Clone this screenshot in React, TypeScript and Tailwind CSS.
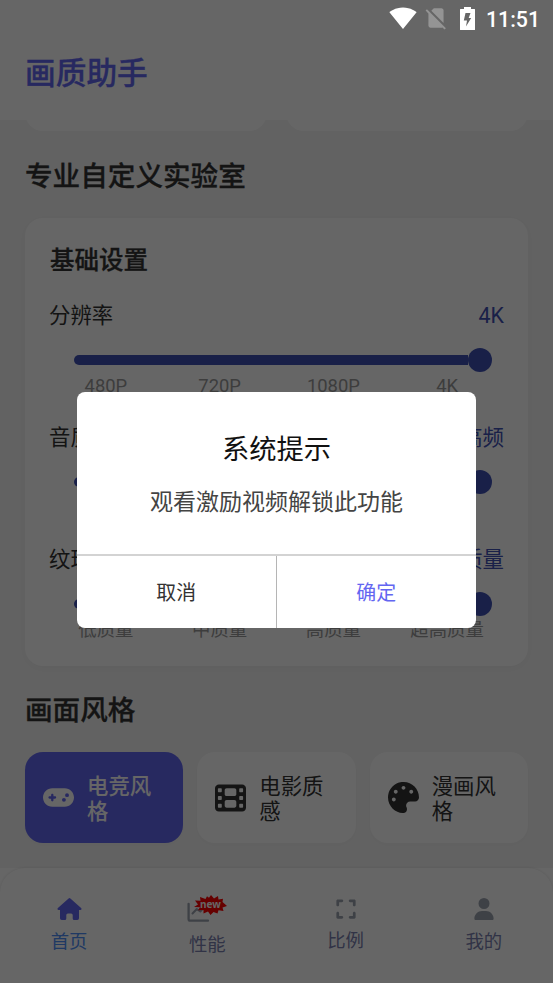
import type { ReactNode } from "react";
import { FaGamepad, FaFilm, FaExpand, FaUser } from "react-icons/fa6";
import { FaPalette } from "react-icons/fa";

function StatusBar() {
  return (
    <div className="absolute left-0 top-0 h-[38px] w-full text-white">
      <svg className="absolute left-[389px] top-[4px]" width="28" height="28" viewBox="0 0 24 24" fill="currentColor">
        <path d="M12.01 21.49L23.64 7c-.45-.34-4.93-4-11.64-4C5.28 3 .81 6.66.36 7l11.63 14.49.01.01.01-.01z" />
      </svg>
      <svg className="absolute left-[423px] top-[5px] text-[#949494]" width="26" height="26" viewBox="0 0 24 24" fill="currentColor">
        <path d="M18.99 5c0-1.1-.89-2-1.99-2h-7L7.66 5.34 19 16.68 18.99 5zM3.65 3.88L2.38 5.15 5 7.77V19c0 1.1.9 2 2 2h10.01c.35 0 .67-.1.96-.26l1.88 1.88 1.27-1.27L3.65 3.88z" />
      </svg>
      <svg className="absolute left-[460px] top-[7px]" width="15" height="23" viewBox="0 0 15 23" fill="currentColor" fillRule="evenodd">
        <path d="M4 0h7v2h3.500q.5 0 .5.500v20q0 .5-.5.500H.5q-.5 0-.5-.5V2.500q0-.5.5-.5H4zM5.500 6L3.800 13.500H7L6 19.500 11.200 11H8.700l1.800-5z" />
      </svg>
      <span className="absolute left-[486px] top-[7px] font-[Roboto] text-[21.3px] font-medium leading-[26px]">11:51</span>
    </div>
  );
}

function SliderRow({ name, value, marks }: { name: string; value: string; marks: string[] }) {
  return (
    <div className="h-[122px]">
      <div className="flex h-[32px] items-center justify-between text-[21.4px] leading-[32px]">
        <span className="text-[#333]">{name}</span>
        <span className="text-[#3f51b5]">{value}</span>
      </div>
      <div className="mt-[15px] flex h-[25px] items-center pl-[25px] pr-[12px]">
        <div className="h-[10px] flex-1 rounded-l-full bg-[#3f51b5]" />
        <div className="size-[24px] rounded-full bg-[#3f51b5]" />
      </div>
      <div className="grid grid-cols-4 text-center text-[18.4px] leading-[27px] text-[#999]">
        {marks.map((m) => (
          <span key={m}>{m}</span>
        ))}
      </div>
    </div>
  );
}

function StyleCard({ icon, label, active }: { icon: ReactNode; label: string; active?: boolean }) {
  return (
    <div
      className={
        active
          ? "flex h-[91px] items-center gap-[13px] rounded-[18px] bg-[#6366f1] px-[18px] text-white shadow-[0_2px_10px_rgba(0,0,0,0.02)]"
          : "flex h-[91px] items-center gap-[13px] rounded-[18px] bg-white px-[18px] text-[#333] shadow-[0_2px_10px_rgba(0,0,0,0.02)]"
      }
    >
      <span className="flex w-[31px] shrink-0 justify-center">{icon}</span>
      <span
        className={
          active
            ? "w-[66px] pt-[2px] text-[21.4px] font-medium leading-[25px]"
            : "w-[66px] pt-[2px] text-[21.4px] leading-[25px]"
        }
      >
        {label}
      </span>
    </div>
  );
}

function HouseIcon() {
  return (
    <svg width="25" height="22" viewBox="0 0 25 22" fill="#6366f1">
      <path d="M11.600.4q.9-.7 1.800 0l10.700 9.700q.6.600.4 1.200-.3.700-1 .7H22v8.300q0 1.700-1.700 1.700h-3.100q-1.500 0-1.500-1.500V17q0-1.600-1.600-1.600h-3.200q-1.600 0-1.600 1.600v3.500Q9.300 22 7.800 22H4.700Q3 22 3 20.300V12H1.500q-.7 0-1-.7-.2-.6.4-1.200z" />
    </svg>
  );
}

function TrendIcon() {
  return (
    <svg width="24" height="24" viewBox="0 0 24 24" fill="none" stroke="#9ca3af" strokeLinecap="round" strokeLinejoin="round">
      <path strokeWidth="2.300" d="M1.600 4.800V20q0 1.700 1.700 1.700H21" />
      <path strokeWidth="2" d="M5.500 14.500L9.800 10l3.500 2.500L18 7" />
    </svg>
  );
}

function NewBadge() {
  return (
    <svg className="absolute left-[7px] top-[-4px]" width="33" height="21" viewBox="0 0 33 21">
      <path
        fill="#ff0000"
        d="M17 0l3 3.500 4-2.500.5 3.500 4.500-.8-.5 3.300 4.500 4-4.500 1.500 1 3.500-5-.7-1 3.200-4-1.500-3 3-2.500-3.500-4.500 2 0-3.500-5.500.3 2-3L0 12l4-2.500L1 5.500l5.500.3L6 2l5.500 2L13 1.200l2 1.600z"
      />
      <text x="16.500" y="12.500" textAnchor="middle" fontFamily="Noto Sans" fontWeight="700" fontSize="10" fill="#fff">
        new
      </text>
    </svg>
  );
}

export default function App() {
  return (
    <div className="relative h-[983px] w-[553px] overflow-hidden bg-[#f5f5f5] font-[Roboto,'Noto_Sans_CJK_SC',sans-serif]">
      <header className="relative flex h-[120px] items-end bg-white px-[25px] pb-[24px]">
        <h1 className="text-[30.7px] font-medium leading-[45px] text-[#6366f1] [-webkit-text-stroke:0.3px]">画质助手</h1>
      </header>

      <main className="px-[25px]">
        <div className="h-[11px] overflow-hidden">
          <div className="-mt-[49px] grid grid-cols-2 gap-[19px]">
            <div className="h-[60px] rounded-[18px] bg-white" />
            <div className="h-[60px] rounded-[18px] bg-white" />
          </div>
        </div>

        <h2 className="mt-[26px] text-[27.6px] font-medium leading-[40px] text-[#333] [-webkit-text-stroke:0.3px]">专业自定义实验室</h2>

        <section className="mt-[21px] h-[448px] rounded-[18px] bg-white px-[24px] pt-[25px] shadow-[0_2px_12px_rgba(0,0,0,0.03)]">
          <h3 className="mb-[21px] pl-px text-[24.5px] font-medium leading-[36px] text-[#333] [-webkit-text-stroke:0.3px]">基础设置</h3>
          <SliderRow name="分辨率" value="4K" marks={["480P", "720P", "1080P", "4K"]} />
          <SliderRow name="音质" value="超高频" marks={[]} />
          <SliderRow name="纹理" value="超高质量" marks={["低质量", "中质量", "高质量", "超高质量"]} />
        </section>

        <h2 className="mt-[25px] text-[27.6px] font-medium leading-[40px] text-[#333] [-webkit-text-stroke:0.3px]">画面风格</h2>

        <div className="mt-[21px] grid grid-cols-3 gap-[14px]">
          <StyleCard active label="电竞风格" icon={<FaGamepad className="size-[31px]" />} />
          <StyleCard label="电影质感" icon={<FaFilm className="h-[32px] w-[31px]" />} />
          <StyleCard label="漫画风格" icon={<FaPalette className="size-[31px]" />} />
        </div>
      </main>

      <div className="mt-[25px] h-[115px] bg-white">
        <nav className="grid h-full grid-cols-4 rounded-t-[25px] bg-white pt-[30px] text-[18.4px] leading-[27px] text-[#7a7fae] shadow-[0_0_3px_rgba(0,0,0,0.12)]">
          <div className="flex flex-col items-center text-[#4f8ef7]">
            <HouseIcon />
            <span className="mt-[8px]">首页</span>
          </div>
          <div className="flex flex-col items-center">
            <div className="relative mt-[1px] w-[40px]">
              <TrendIcon />
              <NewBadge />
            </div>
            <span className="mt-[8px]">性能</span>
          </div>
          <div className="flex flex-col items-center">
            <FaExpand className="size-[22px] text-[#9ca3af]" />
            <span className="mt-[7px]">比例</span>
          </div>
          <div className="flex flex-col items-center">
            <FaUser className="size-[22px] text-[#9ca3af]" />
            <span className="mt-[8px]">我的</span>
          </div>
        </nav>
      </div>

      <div className="absolute inset-0 bg-black/60 pl-[77px] pt-[392px]">
        <div role="dialog" className="flex h-[236px] w-[399px] flex-col overflow-hidden rounded-[8px] bg-white text-center">
          <h2 className="mt-[38px] text-[27.3px] leading-[40px] text-[#111]">系统提示</h2>
          <p className="mt-[16px] text-[23px] leading-[34px] text-[#444]">观看激励视频解锁此功能</p>
          <div className="mt-auto grid h-[74px] grid-cols-2 border-t-2 border-[#d3d3d3] text-[19.9px] leading-[72px]">
            <button className="border-r border-[#b5b5b5] pt-[2px] text-[#333]">取消</button>
            <button className="pt-[2px] text-[#6366f1]">确定</button>
          </div>
        </div>
      </div>

      <StatusBar />
    </div>
  );
}
